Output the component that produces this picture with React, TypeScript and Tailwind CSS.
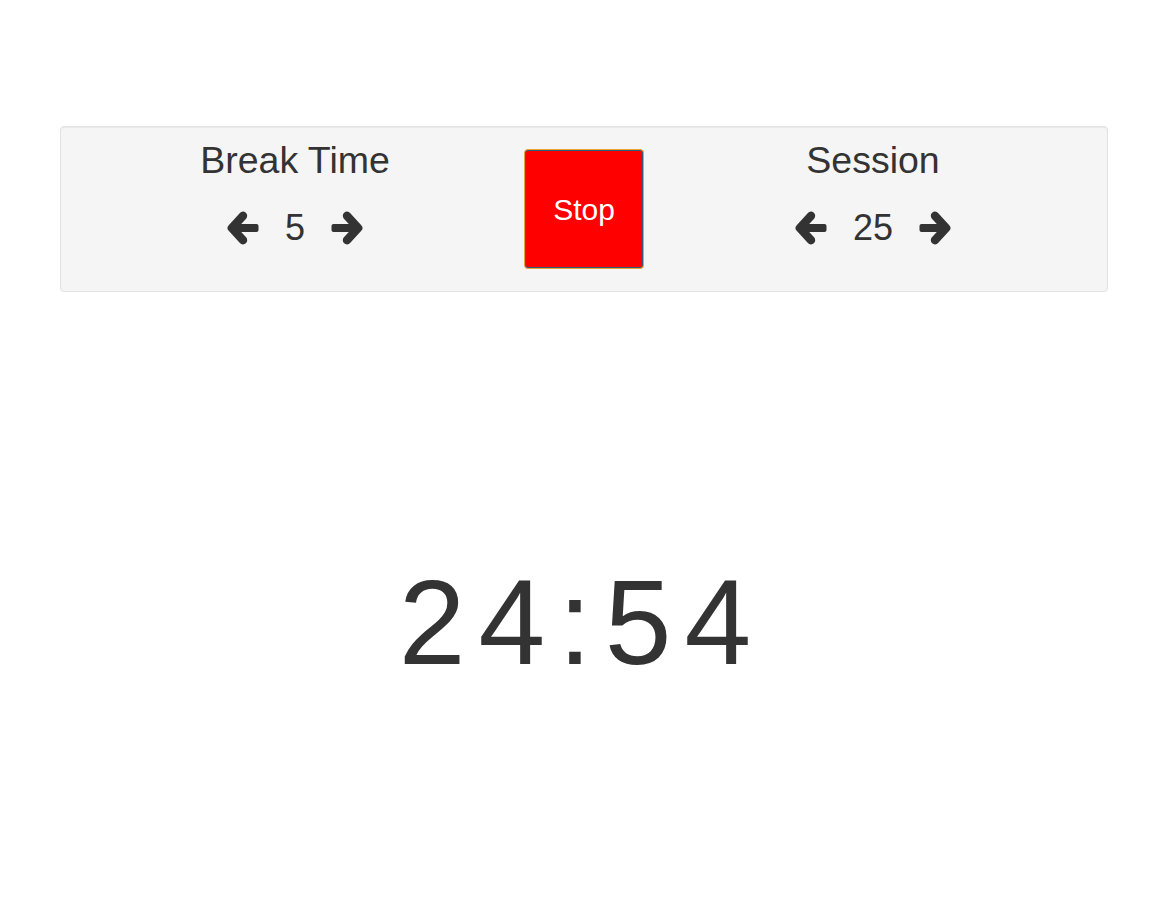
import React, { useState } from 'react'

const Arrow = ({ dir }) => {
  return (
    <svg
      width="32"
      height="34"
      viewBox="0 0 32 34"
      className={dir === 'right' ? 'scale-x-[-1]' : ''}
    >
      <rect x="8" y="13" width="23.5" height="8" rx="2" fill="#333" />
      <polyline
        points="16,4.8 4.8,17 16,29.2"
        fill="none"
        stroke="#333"
        strokeWidth="8.4"
        strokeLinecap="round"
        strokeLinejoin="round"
      />
    </svg>
  )
}

const Counter = ({ label, value, onDown, onUp }) => {
  return (
    <div className="flex-1 flex flex-col items-center pt-[13px]">
      <h2 className="text-[37.5px] leading-[40px] font-normal">{label}</h2>
      <div className="mt-[28px] flex items-center gap-[26px] h-[40px]">
        <button onClick={onDown}>
          <Arrow dir="left" />
        </button>
        <span className="text-[36px] leading-[40px]">{value}</span>
        <button onClick={onUp}>
          <Arrow dir="right" />
        </button>
      </div>
    </div>
  )
}

const App = () => {
  const [breakTime, setBreakTime] = useState(5)
  const [session, setSession] = useState(25)
  const [running, setRunning] = useState(true)

  return (
    <div className="min-h-screen bg-white text-[#333] font-['Liberation_Sans',Arial,sans-serif]">
      <div className="ml-[60px] w-[1048px] pt-[126px]">
        <div className="flex px-[19px] gap-[14px] bg-[#f5f5f5] border border-[#e3e3e3] rounded-[4px] shadow-[inset_0_1px_1px_rgba(0,0,0,0.05)]">
          <Counter
            label="Break Time"
            value={breakTime}
            onDown={() => setBreakTime(Math.max(1, breakTime - 1))}
            onUp={() => setBreakTime(breakTime + 1)}
          />
          <button
            onClick={() => setRunning(!running)}
            className="w-[120px] h-[120px] my-[22px] shrink-0 bg-[#ff0000] text-white text-[30px] rounded-[4px] border border-[#e6a532] shadow-[inset_0_0_0_1px_#2f5a78]"
          >
            {running ? 'Stop' : 'Start'}
          </button>
          <Counter
            label="Session"
            value={session}
            onDown={() => setSession(Math.max(1, session - 1))}
            onUp={() => setSession(session + 1)}
          />
        </div>
        <div className="mt-[270px] pr-[5px] text-center text-[120px] leading-[120px] tracking-[13px]">
          24:54
        </div>
      </div>
    </div>
  )
}

export default App
